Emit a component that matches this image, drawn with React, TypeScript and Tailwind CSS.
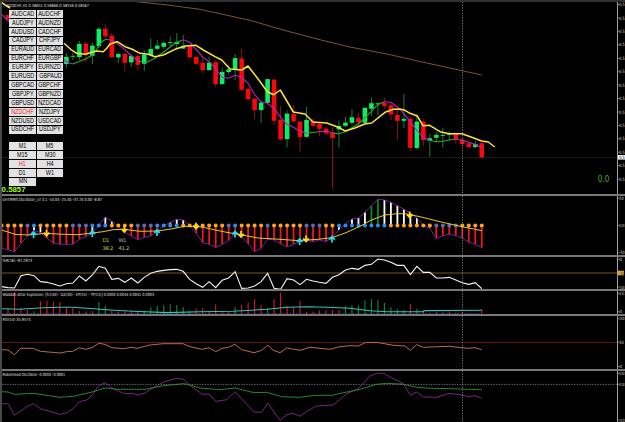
import type { ReactNode } from 'react'

const PAIRS = [
  ['AUDCAD', 'AUDCHF'],
  ['AUDJPY', 'AUDNZD'],
  ['AUDUSD', 'CADCHF'],
  ['CADJPY', 'CHFJPY'],
  ['EURAUD', 'EURCAD'],
  ['EURCHF', 'EURGBP'],
  ['EURJPY', 'EURNZD'],
  ['EURUSD', 'GBPAUD'],
  ['GBPCAD', 'GBPCHF'],
  ['GBPJPY', 'GBPNZD'],
  ['GBPUSD', 'NZDCAD'],
  ['NZDCHF', 'NZDJPY'],
  ['NZDUSD', 'USDCAD'],
  ['USDCHF', 'USDJPY'],
].flat()

const TIMEFRAMES = ['M1', 'M5', 'M15', 'M30', 'H1', 'H4', 'D1', 'W1', 'MN']

const barX = (i: number) => 1.5 + i * 6.49

// [body top, body bottom, wick top, wick bottom, bullish], starting at bar 10
const CANDLES: [number, number, number, number, 0 | 1][] = [
  [57, 64, 53, 68, 1], [56, 56.6, 52.5, 60, 1], [44, 57, 41, 60, 1], [43.7, 55, 41, 62, 0],
  [45.7, 55.7, 43, 64, 1], [29, 46, 27, 48, 1], [29, 36, 24, 39, 0], [35.7, 57, 33, 57.5, 0],
  [54, 57.3, 52.5, 63, 1], [54, 62.7, 52.5, 71.5, 0], [56, 62.3, 55, 67, 1], [56, 64.7, 55, 70, 0],
  [54.7, 63.7, 50, 71, 1], [49, 55, 38.5, 56, 1], [45.7, 48.7, 40, 50, 1], [43, 46.7, 41.5, 49, 1],
  [42.3, 42.9, 36.5, 46, 1], [42, 44, 33, 48, 1], [46, 48.5, 35, 49, 1], [46, 57, 46, 58.5, 0],
  [57, 63.7, 56, 65, 0], [63, 70, 58, 73, 0], [62.7, 70, 56.5, 71, 1], [62.3, 84, 60.5, 87, 0],
  [72, 84, 68, 85, 1], [69.5, 72, 65, 74, 1], [58.2, 69, 54, 80, 1], [58.5, 89.7, 48.5, 91, 0],
  [89, 99, 87, 101, 0], [99, 110, 97, 119, 0], [102.7, 110, 101, 123, 1], [79.2, 102.7, 79, 104, 1],
  [79.7, 120.7, 79, 125, 0], [120, 139.3, 105.7, 140, 0], [113.7, 139, 110.5, 147.5, 1], [114, 121.3, 105, 123, 0],
  [121.7, 137, 121, 152, 0], [120, 136.7, 106.7, 138, 1], [121, 125.7, 118, 127, 0], [124, 128.7, 123, 136, 0],
  [128.7, 133.3, 127, 135, 0], [132.3, 138, 127, 189, 0], [126, 129.3, 120.5, 147.5, 1], [122.7, 125.7, 117, 127, 1],
  [117.3, 122.7, 109, 125, 1], [118, 122.3, 113, 124, 0], [108, 122.7, 107, 124, 1], [103.3, 108.7, 97.5, 116, 1],
  [103.5, 104.1, 102.5, 115, 1], [103, 106, 97.5, 108.5, 0], [105.3, 114.3, 104, 120, 0], [115, 120.7, 110, 139.5, 0],
  [119, 120.7, 94, 128, 1], [119, 147.9, 117, 151, 0], [121.7, 147.9, 114, 149.5, 1], [121.7, 140, 119.3, 146, 0],
  [138.3, 140.7, 134, 156.7, 1], [135, 137.7, 132, 142.7, 1], [135.2, 135.8, 127.7, 147.5, 1], [133.5, 134.7, 131.5, 140, 1],
  [134, 139.7, 132.5, 143.5, 0], [139.7, 144, 138.5, 146, 0], [143.3, 147, 143, 148.5, 0], [144, 147, 140.5, 148, 1],
  [143.3, 157.3, 142.7, 158.5, 0],
]

// oscillator heights around the zero line, in thirds of a pixel (positive = below)
const TMMS = [
  68, 73, 78, 53, 31, 15, 21, 38, 53, 56, 56, 56, 41, 33, 23, -2, -25, -13, 3, 21, 31, 42, 36, 31, 15,
  1, -10, -19, -17, -1, 23, 51, 56, 66, 56, 45, 23, 33, 55, 78, 68, 41, 43, 55, 64, 56, 48, 43, 48, 43,
  48, 35, 13, -5, -20, -23, -40, -59, -79, -77, -70, -60, -49, -37, -23, 0, 8, 39, 31, 26, 30, 38, 50, 56, 66,
]
const WHITE_BARS = [5, 6, 14, 16, 17, 25, 26, 27, 28, 52, 53, 54, 55, 56, 59, 60, 61, 62, 63, 64]
const GREEN_BARS = [57, 58]
const DOTS =
  'ooooBboooooBBBbbbooooBBBbbbboooooooBbooooBoooooBBBoobbbbbbbboooooooBBBBoooo'
const DOT_FILL: Record<string, string> = { o: '#ffa618', b: '#2f8cf0', B: '#5a6cb8' }

const WPR = [
  290, 293, 294, 257, 253, 257, 275, 277, 282, 288, 281, 279, 258, 273, 255, 229, 235, 268, 265, 277, 264, 279, 262, 250, 244,
  241, 239, 238, 244, 268, 281, 292, 275, 293, 271, 264, 245, 295, 294, 288, 275, 250, 295, 298, 266, 270, 284, 268, 273, 277,
  280, 262, 254, 240, 235, 238, 226, 223, 207, 210, 217, 226, 226, 254, 229, 247, 247, 264, 264, 262, 270, 278, 283, 278, 296,
].map((v) => 190 + v / 3)

const EXPLOSION = [
  14, 19, 66, 19, 12, 8, 39, 39, 36, 36, 22, 17, 9, 8, 9, 36, 24, 9, 7, 8, 10, 9, 10, 20, 24,
  26, 29, 27, 20, 8, 16, 19, 9, 29, 9, 8, 20, 27, 34, 44, 27, 17, 44, 64, 24, 20, 39, 7, 7, 11,
  11, 12, 12, 24, 26, 24, 41, 44, 41, 34, 20, 14, 12, 29, 16, 12, 4, 6, 5, 8, 4, 5, 3, 3, 14,
]
const EXPLOSION_UP = [5, 15, 16, 22, 23, 24, 25, 26, 27, 28, 29, 36, 41, 53, 54, 55, 56, 57, 58, 59, 60, 61, 62, 64]

const FAST_MA = [
  { up: false, d: '64,60 68,62.5 72.7,64' },
  { up: true, d: '72.7,64 85,59.3 92.3,55 97,49 101.7,41.7 105,39.8 108.3,39.3' },
  { up: false, d: '108.3,39.3 115,41.7 123.3,48.3 131.7,56 138.3,61' },
  { up: true, d: '138.3,61 143,62.2 147.3,62 155,58.3 163.3,52.3 175,43.3 181.7,40.3' },
  {
    up: false,
    d: '181.7,40.3 185,40.3 189.7,42.3 196,49.3 203.3,57.7 210,62.3 215.3,68.3 222,77.3 228.3,78.3 235,75.3 241.3,77 248,83.3 255,95 261,101.7 267.3,103.3 273.7,108.3 280.3,116.7 286.7,124 293.3,127.3 299.7,130.7 306.3,133.3',
  },
  { up: true, d: '306.3,133.3 318,131.7' },
  { up: false, d: '318,131.7 326.7,131.3 332.3,133' },
  { up: true, d: '332.3,133 338.7,133.7 345.3,131.7 358.3,124 371.3,111.7 377.7,104.7 384.3,101.7' },
  { up: false, d: '384.3,101.7 390.7,102.3 397.3,106.7 403.7,113.3 410,121.7 416.7,130 423,137.3 429.7,140.3' },
  { up: true, d: '429.7,140.3 436,141.7 442.7,141.3 449,140 455.7,139.3' },
  { up: false, d: '455.7,139.3 462,140 471.7,143.3 481.7,147.3' },
]

const SLOW_MA =
  'M1,2 5,5 10,8 M64,43.3 70.7,49.3 76.7,53.3 85,54.3 91.7,52.3 96.7,51 103.3,51.7 107,48 110,44 117.3,41.7 125,46.7 131.7,49 140,53.3 148.3,54.3 155,56.7 163.3,55 175,49.3 185,46 196,45.3 203.3,50 215,56.7 221.7,60 230,69 241.7,70 248,66 258.3,79.3 267.3,91.7 273.7,94.7 280.3,90 293.3,112 305,114 313,122 326.7,123 338.3,127.3 345.3,131 355,128 364.7,124 371.7,123 385,112.3 393.3,109.3 400,109 405,110.3 410,113.3 417.3,116 423,125.7 429.7,125.3 440,131.7 449,133.7 462,133.7 471.7,137.3 481.7,141 488.3,142 494.7,147'

const RSI =
  '1.7,349.7 8,350 14.3,354.7 20.7,348.3 33.3,348.3 40.3,351.3 60,353 66.3,351.7 72.7,351.3 79.3,347.7 85.7,349.3 92,347.7 98.7,343.3 105,344.3 111.7,347.7 124.3,348.7 131,347.3 137.3,348.3 150,345 163.3,343.7 183,343.7 190,346.7 202.3,349.3 209,347.7 215.7,351.7 222,348.3 228.3,347.3 235,344.3 241.7,349.7 254,352.7 261.7,350.3 267.7,345.3 273.3,350.3 280,352.7 286.7,348 300,350.3 310,347.3 330,349.3 338.3,347 350,345.7 358.3,346 365,342.7 376.7,342.3 393.3,345.3 405,346 410.3,350.3 416.7,344.7 423.3,347.3 450,346.3 466.7,348.3 475,347.7 481.7,349.7'

const ROBIN_FAST =
  '1.7,403.7 8.3,404 14.3,415.3 20.7,411 27.3,406.3 33.7,403.7 40.3,408.7 60,414.3 66.7,412.7 73.3,408.7 79.3,401.7 86.7,400 92,395.3 98.7,386 105,382.7 111.7,387.7 124.3,393.7 133.3,393.3 137.3,395 145,393 151.7,388.7 163.3,382 176.7,378.3 183.3,379.3 189.3,384.7 202.3,394.3 209,394 215.7,401.3 226.7,399.7 235,391.7 254,412 261.7,412.3 267.7,403 280,420.3 286.7,414.7 293.3,413.3 300,416.3 306.7,411.3 316.7,406 333.3,405 346.7,393.7 358.3,388.7 370,376 376.7,373.3 383.3,373.3 390,377 403.3,383.7 410.3,395.3 416.7,392 423.3,397 436.7,397.3 449.3,393.3 460,394.7 468.3,396.7 475,395.7 481.7,398.3'

const ROBIN_SLOW =
  '1.7,391.7 8.3,392 14.3,394.3 33.3,393.3 60,397.3 73.3,396.3 92,392 105,388 116.7,389.3 145,389.3 163.3,385.7 183.3,383.7 189.3,384.7 200,388 220,389.7 235,388 254,392.7 266.7,392.3 281.7,396.7 300,397.3 315,395.3 331.7,395.3 346.7,392 360,389.3 376.7,384.3 386.7,383.3 403.3,384.3 416.7,387.3 430,388.3 450,388.7 481.7,389.7'

const line = (values: number[]) => values.map((y, i) => `${barX(i)},${y}`).join(' ')

type AxisLabel = { y: number; text: string; tag?: 'white' | 'yellow' }

type PanelProps = {
  top: number
  height: number
  title: string
  titleWidth: number
  labels: AxisLabel[]
  children: ReactNode
}

function Panel({ top, height, title, titleWidth, labels, children }: PanelProps) {
  return (
    <svg
      width="625"
      height={height}
      viewBox={`0 ${top} 625 ${height}`}
      className="block shrink-0 bg-black font-['DejaVu_Sans',sans-serif]"
    >
      {children}
      <path d={`M462.5 ${top}v${height}`} stroke="#8a8a8a" strokeWidth="0.8" strokeDasharray="1.3 1.3" />
      <path d={`M617.5 ${top}v${height}`} stroke="#a0a0a0" strokeWidth="1" />
      {labels.map((l) => (
        <g key={l.y}>
          <path d={`M617.5 ${l.y}h2`} stroke="#a0a0a0" strokeWidth="0.7" />
          {l.tag && (
            <rect
              x="618"
              y={l.y - 2.3}
              width={l.tag === 'white' ? 7 : 6}
              height="4.6"
              fill={l.tag === 'white' ? '#f0f0f0' : '#d2ac35'}
            />
          )}
          <text
            x="619.2"
            y={l.y + 1.6}
            fontSize="4.4"
            fill={l.tag ? '#222' : '#d8d8d8'}
            textLength={l.text.length > 1 ? (l.text.length > 2 ? 5.4 : 4.4) : undefined}
            lengthAdjust="spacingAndGlyphs"
          >
            {l.text}
          </text>
        </g>
      ))}
      <text
        x={top < 10 ? 7 : 2.6}
        y={top + 4.8}
        fontSize="4.3"
        fill="#e0e0e0"
        textLength={titleWidth}
        lengthAdjust="spacingAndGlyphs"
      >
        {title}
      </text>
    </svg>
  )
}

function Candles() {
  return (
    <>
      {CANDLES.map(([a, b, hi, lo, up], k) => {
        const x = barX(k + 10)
        return (
          <g key={k}>
            <path d={`M${x} ${hi}V${lo}`} stroke={up ? '#229a44' : '#b01818'} strokeWidth="0.8" />
            <rect x={x - 2.3} y={a - 0.1} width="4.6" height={b - a + 0.2} fill={up ? '#0cee64' : '#fa060c'} />
          </g>
        )
      })}
    </>
  )
}

function PricePanel() {
  const scale = Array.from({ length: 15 }, (_, i) => ({ y: 4.6 + i * 13.42, text: '0.5' })).filter((l) => l.y < 190)
  return (
    <Panel
      top={2}
      height={192}
      title="NZDCHF,H1  0.58651 0.58666 0.58556 0.58567"
      titleWidth={82}
      labels={[...scale, { y: 157.3, text: '0.5', tag: 'white' }]}
    >
      <path d="M2 157.5H617" stroke="#262626" strokeWidth="0.7" />
      <path d="M3 3.6h2.4l-1.2 1.8z" fill="#bbb" />
      <rect x="5.5" y="15" width="4.5" height="4" fill="#fa060c" />
      <polyline
        points="130,1 165,4.7 200,9.3 250,20.3 285,30.5 321,40 350,47 387,54 420,61.5 481.7,75"
        fill="none"
        stroke="#9c6844"
        strokeWidth="0.8"
      />
      <Candles />
      {FAST_MA.map((s) => (
        <polyline key={s.d} points={s.d} fill="none" stroke={s.up ? '#28ac28' : '#b424c0'} strokeWidth="1.1" />
      ))}
      <polyline points="1.5,14 5,18 10,22" fill="none" stroke="#b424c0" strokeWidth="1.1" />
      <path d={SLOW_MA} fill="none" stroke="#fce23a" strokeWidth="1.5" strokeLinejoin="round" />
      <text x="597.8" y="182.4" fontSize="8.6" fill="#48a848" textLength="11.6" lengthAdjust="spacingAndGlyphs">
        0.0
      </text>
      <text
        x="1.6"
        y="191.9"
        fontSize="7.8"
        fontWeight="700"
        fill="#a0ff14"
        className="font-['Liberation_Sans',sans-serif]"
        textLength="24"
        lengthAdjust="spacingAndGlyphs"
      >
        0.5857
      </text>
    </Panel>
  )
}

function Arrow({ x, y, up }: { x: number; y: number; up?: boolean }) {
  return (
    <path
      d={up ? 'M0 3.6V-2M-2.8 0.6L0 -2.4L2.8 0.6' : 'M0 -3.6V2M-2.8 -0.6L0 2.4L2.8 -0.6'}
      transform={`translate(${x} ${y})`}
      fill="none"
      stroke={up ? '#20e4f4' : '#ffdc14'}
      strokeWidth="1.7"
    />
  )
}

function TmmsPanel() {
  const zero = 225.6
  return (
    <Panel
      top={196}
      height={59}
      title="smTMMS Oscillator_v7.3.1 -14.04 -25.40 -37.24 0.00 -8.87"
      titleWidth={99.5}
      labels={[
        { y: 198.3, text: '50' },
        { y: 225.6, text: '0.00' },
        { y: 252.7, text: '-50' },
      ]}
    >
      {TMMS.map((v, i) => (
        <path
          key={i}
          d={`M${barX(i)} ${zero}v${v / 3}`}
          stroke={WHITE_BARS.includes(i) ? '#fff' : GREEN_BARS.includes(i) ? '#0c8a14' : '#f0181c'}
          strokeWidth="1.8"
        />
      ))}
      <polyline points={line(TMMS.map((v) => zero + v / 3))} fill="none" stroke="#741ca4" strokeWidth="1" />
      {TMMS.map((_, i) => (
        <circle key={i} cx={barX(i)} cy={zero} r="2" fill={DOT_FILL[DOTS[i]]} />
      ))}
      <polyline
        points="1.5,230 8,232 15,234.3 28,235 46,233.3 60,234.2 78,234.7 92,233 103,231.7 113,229.7 124,229.3 140,231.3 157,231 171,229 185,226.3 196,226.3 203,227.3 225,232 242,235 258,238 280,239.3 298,240.6 318,239.3 332,237.7 346,232.7 360,226.3 372,219.7 385,215 397,213.7 405,213.7 420,216.7 440,221.7 462,226.7 481.7,230.6"
        fill="none"
        stroke="#e8c82c"
        strokeWidth="1"
      />
      <Arrow up x={33.6} y={234.3} />
      <Arrow x={46.5} y={233.3} />
      <Arrow up x={92.3} y={233.5} />
      <Arrow x={124.3} y={229.6} />
      <Arrow up x={157} y={232.3} />
      <Arrow x={196} y={226.3} />
      <Arrow up x={235} y={233.8} />
      <Arrow x={241} y={234.5} />
      <Arrow up x={299.7} y={241.3} />
      <Arrow x={306} y={239} />
      <Arrow up x={332} y={239} />
      <Arrow x={409.7} y={215} />
      <g fontSize="5.2" lengthAdjust="spacingAndGlyphs">
        <text x="102.6" y="242" fill="#c0c02c" textLength="6.6">D1</text>
        <text x="118.6" y="242" fill="#b4b4b4" textLength="7.6">W1</text>
        <text x="102.6" y="250.2" fill="#d4d430" textLength="10.6">38.2</text>
        <text x="118.6" y="250.2" fill="#d0c09c" textLength="10.6">41.2</text>
      </g>
    </Panel>
  )
}

function WprPanel() {
  return (
    <Panel
      top={257}
      height={32}
      title="%R(16) -97.2973"
      titleWidth={29.5}
      labels={[
        { y: 259.3, text: '0' },
        { y: 273, text: '-50', tag: 'yellow' },
        { y: 287, text: '-100' },
      ]}
    >
      <path d="M2 273H617" stroke="#80602c" strokeWidth="0.9" />
      <polyline points={line(WPR)} fill="none" stroke="#f4f4f4" strokeWidth="1.1" />
    </Panel>
  )
}

function ExplosionPanel() {
  return (
    <Panel
      top={291}
      height={23}
      title="Waddah Attar Explosion: [S(150) - DZ(30) - EP(15) - TP(15)] 0.0000 0.0044 0.0041 0.0003"
      titleWidth={151.5}
      labels={[
        { y: 293.6, text: '0.01' },
        { y: 311.8, text: '0' },
      ]}
    >
      {EXPLOSION.map((v, i) => (
        <path
          key={i}
          d={`M${barX(i)} 314v${-v / 3}`}
          stroke={EXPLOSION_UP.includes(i) ? '#0e8c32' : '#d81824'}
          strokeWidth="1.1"
        />
      ))}
      <path d="M2 313.6H482" stroke="#3a4a9a" strokeWidth="0.6" strokeDasharray="2 1.5" />
      <polyline
        points="1.7,308.7 20,309.3 43,307.7 60,307.3 72,307.3 87,308.3 110,310 133,311.3 167,312.6 200,311.8 233,311.3 267,309.3 287,307.3 307,306.7 327,307.3 350,308.3 370,310.7 387,311.7 423,311.7 425,310.6 481.7,310.3"
        fill="none"
        stroke="#30c4be"
        strokeWidth="1.1"
      />
    </Panel>
  )
}

function RsiPanel() {
  return (
    <Panel
      top={316}
      height={53}
      title="RSI(14) 35.9574"
      titleWidth={28}
      labels={[
        { y: 318.6, text: '100' },
        { y: 342.4, text: '50' },
        { y: 366.5, text: '0' },
      ]}
    >
      <path d="M2 342.5H617" stroke="#7c1a14" strokeWidth="0.8" />
      <polyline points={RSI} fill="none" stroke="#cc7850" strokeWidth="0.9" />
    </Panel>
  )
}

function RobinPanel() {
  return (
    <Panel
      top={371}
      height={51}
      title="RobinHood Oscillator -0.0003 -0.0001"
      titleWidth={62.5}
      labels={[
        { y: 373.4, text: '0.00' },
        { y: 384.3, text: '0.00' },
        { y: 420, text: '-0.0' },
      ]}
    >
      <path d="M2 384.4H617" stroke="#8c8c8c" strokeWidth="0.8" strokeDasharray="1.3 1.3" />
      <polyline points={ROBIN_FAST} fill="none" stroke="#84288e" strokeWidth="0.9" />
      <polyline points={ROBIN_SLOW} fill="none" stroke="#309432" strokeWidth="0.9" />
    </Panel>
  )
}

function ButtonGrid({ items, active }: { items: string[]; active: string }) {
  return (
    <div className="grid grid-cols-2 gap-px">
      {items.map((item) => (
        <button
          key={item}
          className={`flex h-[7.92px] items-center justify-center bg-[#e2e2e2] text-[6.5px] leading-none ${
            item === active ? 'text-[#f02020]' : 'text-black'
          }`}
        >
          <span className="scale-x-[0.84]">{item}</span>
        </button>
      ))}
    </div>
  )
}

export default function App() {
  return (
    <div className="relative flex h-[422px] w-[625px] flex-col gap-[2px] overflow-hidden border-t-2 border-[#303030] bg-[#787878]">
      <PricePanel />
      <TmmsPanel />
      <WprPanel />
      <ExplosionPanel />
      <RsiPanel />
      <RobinPanel />
      <div className="absolute inset-y-0 left-0 w-[1.5px] bg-[#484848]" />
      <div className="absolute top-[8px] left-[9.4px] flex w-[53.8px] flex-col gap-[8.4px] font-['Liberation_Sans',sans-serif]">
        <ButtonGrid items={PAIRS} active="NZDCHF" />
        <ButtonGrid items={TIMEFRAMES} active="H1" />
      </div>
    </div>
  )
}
